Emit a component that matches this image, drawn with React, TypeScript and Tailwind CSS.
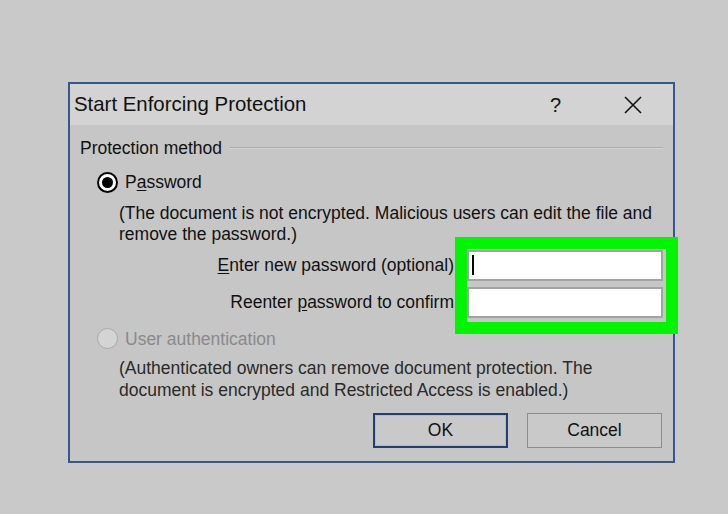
const FONT = { fontFamily: '"Liberation Sans", Arial, sans-serif' };

function Radio({ checked }: { checked: boolean }) {
  if (checked) {
    return (
      <span className="flex h-[21px] w-[21px] shrink-0 items-center justify-center rounded-full border-2 border-black bg-white">
        <span className="h-[11px] w-[11px] rounded-full bg-black" />
      </span>
    );
  }
  return <span className="h-[21px] w-[21px] shrink-0 rounded-full border border-[#a9a9a9] bg-[#d4d4d4]" />;
}

function PasswordInput({ cursor }: { cursor?: boolean }) {
  return (
    <div className="flex h-[31px] w-[196px] items-center border-2 border-[#a3a3a3] bg-white pl-[3px]">
      {cursor && <span className="h-[20px] w-[2px] bg-black" />}
    </div>
  );
}

export default function App() {
  return (
    <div className="h-[514px] w-[728px] overflow-hidden bg-[#c9c9c9] pl-[68px] pt-[82px] text-[#111]" style={FONT}>
      <div className="relative flex h-[381px] w-[607px] flex-col border-2 border-[#35568f] bg-[#c6c6c6]">
        {/* title bar */}
        <div className="flex h-[41px] items-center bg-[#d3d3d3] pl-[4px] pr-[30px]">
          <span className="text-[20.4px] text-[#111]">Start Enforcing Protection</span>
          <span className="ml-auto text-[20px] text-[#111]">?</span>
          <svg className="ml-[62px]" width="20" height="20" viewBox="0 0 20 20">
            <path d="M2 2 L18 18 M18 2 L2 18" stroke="#111" strokeWidth="1.6" fill="none" />
          </svg>
        </div>

        {/* body */}
        <div className="flex flex-1 flex-col pl-[10px] pr-[10px] text-[17.5px]">
          <div className="mt-[10px] flex items-center">
            <span>Protection method</span>
            <div className="ml-[8px] h-[2px] flex-1 border-t border-b border-t-[#acacac] border-b-[#d4d4d4]" />
          </div>

          <div className="ml-[17px] mt-[8px] flex items-center gap-[7px]">
            <Radio checked />
            <span>
              P<span className="underline underline-offset-2">a</span>ssword
            </span>
          </div>

          <div className="ml-[39px] mt-[7px] leading-[21px]">
            (The document is not encrypted. Malicious users can edit the file and
            <br />
            remove the password.)
          </div>

          <div className="mt-[5px] flex flex-col gap-[6px]">
            <div className="flex items-center justify-end gap-[13px]">
              <span>
                <span className="underline underline-offset-2">E</span>nter new password (optional)
              </span>
              <PasswordInput cursor />
            </div>
            <div className="flex items-center justify-end gap-[13px]">
              <span>
                Reenter <span className="underline underline-offset-2">p</span>assword to confirm
              </span>
              <PasswordInput />
            </div>
          </div>

          <div className="ml-[17px] mt-[8px] flex items-center gap-[7px] text-[#8a8a8a]">
            <Radio checked={false} />
            <span>User authentication</span>
          </div>

          <div className="ml-[39px] mt-[5px] leading-[22px] text-[#2a2a2a]">
            (Authenticated owners can remove document protection. The
            <br />
            document is encrypted and Restricted Access is enabled.)
          </div>

          <div className="mt-[12px] flex justify-end gap-[19px] pr-[1px]">
            <button className="h-[35px] w-[135px] border-2 border-[#1e3f7b] bg-[#c9c9c9] text-[17.5px] shadow-[inset_0_0_0_1px_#a7bde0]">
              OK
            </button>
            <button className="h-[35px] w-[135px] border border-[#8c8c8c] bg-[#c9c9c9] text-[17.5px]">Cancel</button>
          </div>
        </div>

        {/* highlight box */}
        <div className="absolute left-[385px] top-[153px] h-[97px] w-[223px] border-[12px] border-[#00f500]" />
      </div>
    </div>
  );
}
